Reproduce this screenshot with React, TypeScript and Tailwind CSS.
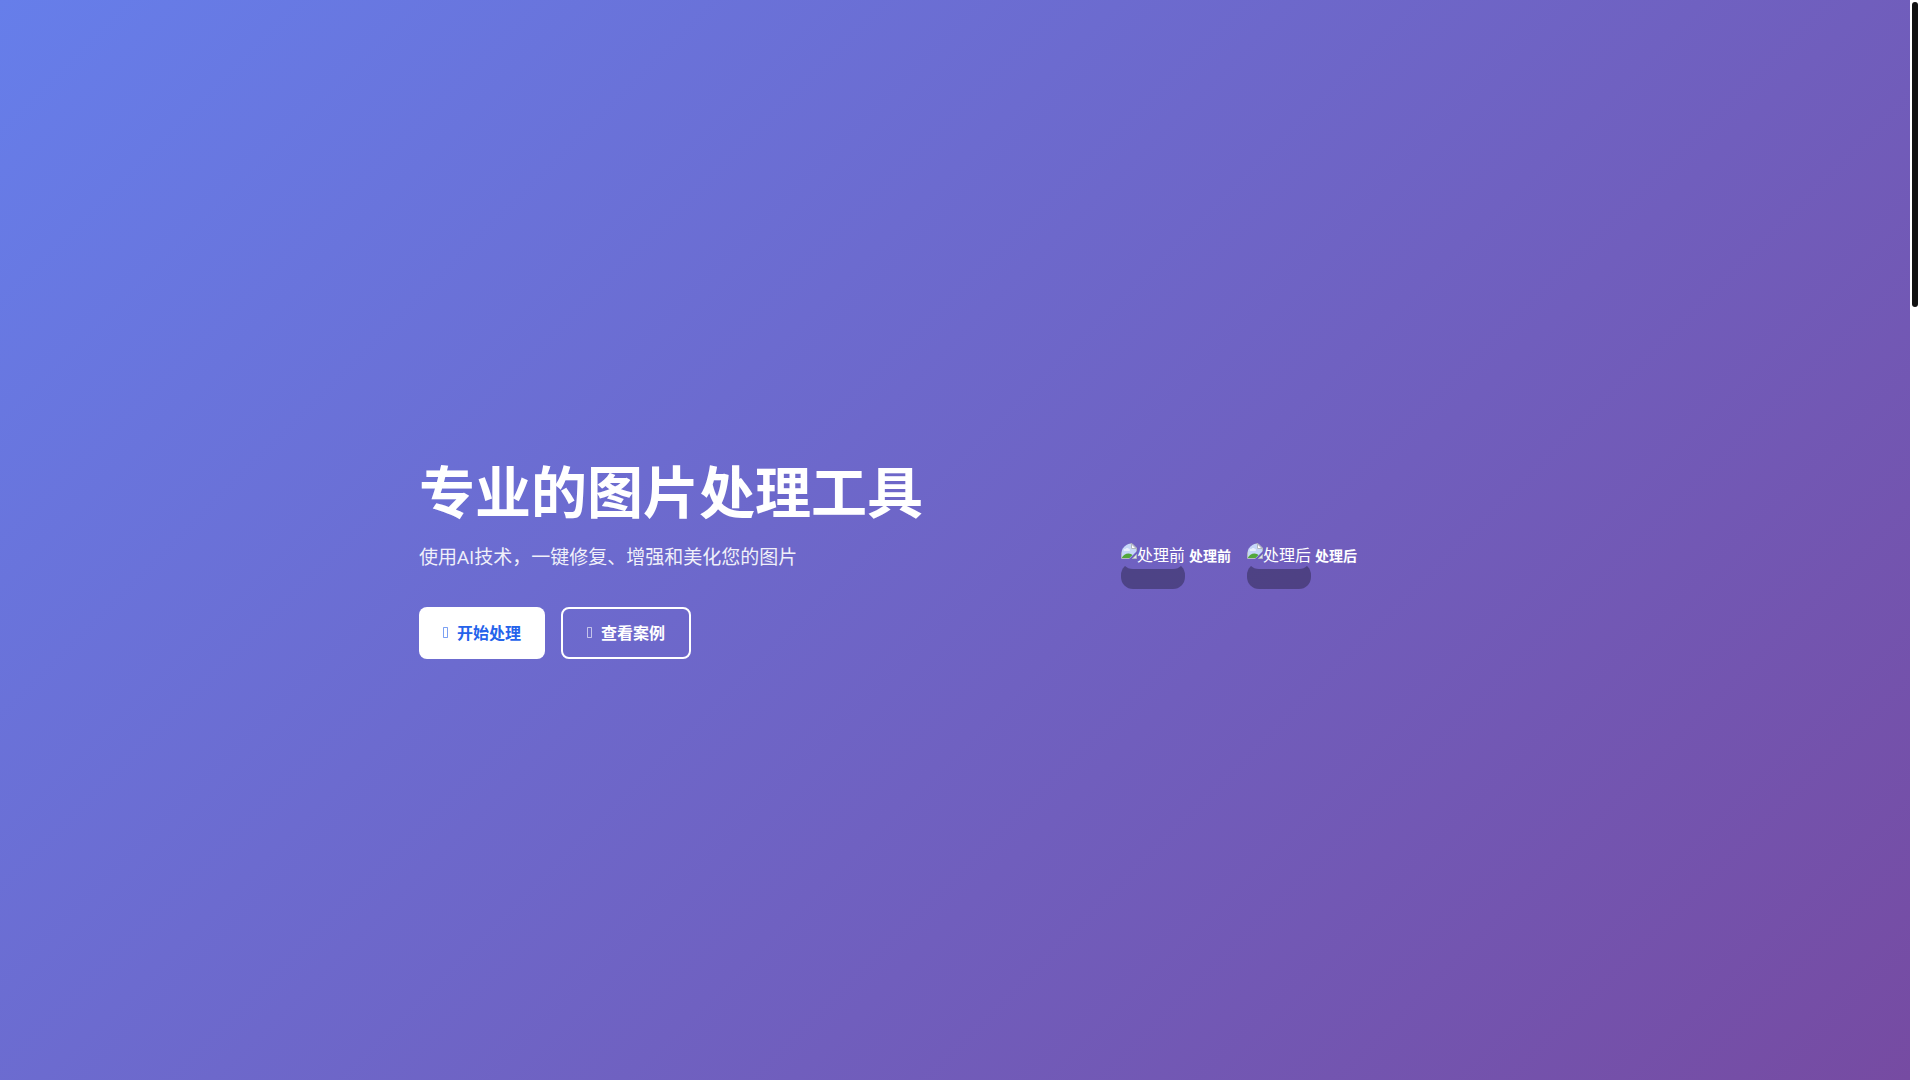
type ComparisonItem = {
  id: string;
  label: string;
};

const COMPARISON: ComparisonItem[] = [
  { id: "before", label: "处理前" },
  { id: "after", label: "处理后" },
];

export default function App() {
  return (
    <div
      lang="zh-CN"
      className="flex min-h-screen bg-white font-['Open_Sans','Noto_Sans_CJK_SC',sans-serif] text-base text-white"
    >
      <Hero />
      <ScrollTrack />
    </div>
  );
}

function Hero() {
  return (
    <main className="flex flex-1 items-center bg-linear-[135deg,#667eea_0%,#764ba2_100%] pt-8">
      <section className="mx-auto grid w-full max-w-[1200px] grid-cols-2 items-center gap-16 px-16">
        <div>
          <h1 className="mb-3 text-[56px] leading-[76px] font-bold whitespace-nowrap">
            专业的图片处理工具
          </h1>
          <p className="mb-[34px] text-[19px] leading-8 opacity-90">
            使用AI技术，一键修复、增强和美化您的图片
          </p>
          <div className="flex gap-4">
            <button
              type="button"
              className="flex items-center gap-2 rounded-lg bg-white px-6 font-semibold text-[#2563eb]"
            >
              <GlyphBox />
              开始处理
            </button>
            <button
              type="button"
              className="flex items-center gap-2 rounded-lg border-2 border-white px-6 py-3 font-semibold"
            >
              <GlyphBox />
              查看案例
            </button>
          </div>
        </div>

        <div className="flex justify-center gap-4">
          {COMPARISON.map((item) => (
            <Preview key={item.id} label={item.label} />
          ))}
        </div>
      </section>
    </main>
  );
}

function Preview({ label }: { label: string }) {
  return (
    <figure className="flex items-center gap-1">
      <span className="flex h-[26px] items-start overflow-hidden rounded-xl shadow-[0_20px_0_rgba(0,0,0,0.3)]">
        <MissingImageIcon />
        <span className="leading-6">{label}</span>
      </span>
      <figcaption className="text-sm font-semibold">{label}</figcaption>
    </figure>
  );
}

// Empty box shown where the icon font has no glyph.
function GlyphBox() {
  return (
    <svg aria-hidden="true" viewBox="0 0 6 12" className="h-3 w-[6px] shrink-0">
      <path d="M.5.5h4v10h-4z" fill="none" stroke="currentColor" strokeOpacity="0.6" />
    </svg>
  );
}

function MissingImageIcon() {
  return (
    <svg aria-hidden="true" viewBox="0 0 16 16" className="size-4 shrink-0">
      <path d="M1 1h10l4 4v4l-6.500 6.500H1z" fill="#c6d7f8" />
      <path d="M3 8C2 6.500 3.500 5.500 4.500 6 5 4.500 7.500 4.500 8 6c1.500 0 1.500 2 0 2z" fill="#e9f0fd" />
      <path d="M1 14.500c1-2 3.500-4 6.500-4 2 0 3 .8 4 1.500l-3 3H1z" fill="#52a83b" />
      <path d="M10.500 1v4.500H15z" fill="#fff" stroke="#b3b8c0" />
      <path d="M.5 15.500V.5H11L15.500 5v3.500M.5 15.500H8" fill="none" stroke="#b3b8c0" />
      <path d="M15.500 11.500v4H11.500z" fill="#dfe5ee" stroke="#b3b8c0" />
    </svg>
  );
}

// Page scrollbar, thumb parked at the top.
function ScrollTrack() {
  return (
    <div aria-hidden="true" className="w-[10px] bg-white p-0.5">
      <div className="h-[305px] rounded-full bg-[#111111]" />
    </div>
  );
}
